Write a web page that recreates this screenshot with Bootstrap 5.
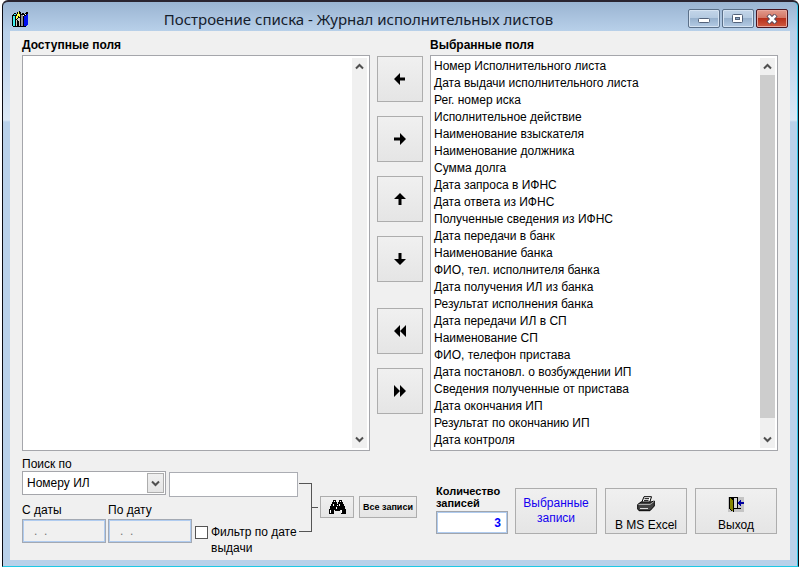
<!DOCTYPE html>
<html lang="ru">
<head>
<meta charset="utf-8">
<meta name="viewport" content="width=device-width, initial-scale=1">
<title>Построение списка - Журнал исполнительных листов</title>
<link rel="stylesheet" href="https://cdn.jsdelivr.net/npm/bootstrap@5.3.0/dist/css/bootstrap.min.css">
<style>
body{font-family:"Liberation Sans",Arial,sans-serif;font-size:12px;line-height:17px;color:#000;background:#fff}
.win{min-height:100vh;margin:0 3px 0 2px;padding:0 8px 6px 7px;border:1px solid #0a0a12;border-top:2px solid #2a2430;border-bottom:1px solid #1fc8e4;border-radius:6px 6px 0 0;box-shadow:inset -1px 0 #35c8ea;
 background:linear-gradient(#9ab4d2 0,#b9d1ea 30px,#bdd3eb 45px,#dbe8f6 118px,#b9d1ea 120px,#b9d1ea 100%)}
.titlebar{height:29px;padding:0 2px 3px}
.title-text{font:15px/18px "Noto Sans","Open Sans",sans-serif;color:#15202c}
.caps{gap:2px}
.cap{width:32px;height:19px;padding:0;border:1px solid #5b7089;border-radius:2px;box-shadow:inset 0 0 0 1px #d5e3f2;background:linear-gradient(#c3d5e9 0,#b3c9e0 48%,#97b1cd 50%,#b4cbe4 100%)}
.cap-close{border-color:#4a1520;box-shadow:inset 0 0 0 1px #e8a79c;background:linear-gradient(#e29a8c 0,#d27463 48%,#b8301b 50%,#cf5a41 100%)}
.client{background:#f0f0f0;padding:6px 12px 4px}
.head{font-weight:700;font-size:12px;line-height:16px;margin-bottom:2px}
.listbox{background:#fff;border:1px solid #a5a6ab;padding:2px 2px 2px 0}
.listbox select{border:0;outline:0;background:#fff;overflow:hidden;padding:1px 0 0;color:#000;min-width:0;font-size:12px;border-radius:0}
.listbox option{padding:0 3px;min-height:17px;line-height:17px}
.sbar{width:15px;background:#f0f0f0}
.sbar button{height:17px;width:15px;padding:0;border:0;background:none}
.thumb{flex:344 0 0;background:#cdcdcd}
.rest{flex:13 0 0}
.mid{width:60px}
.tool{border:1px solid #adadad;background:linear-gradient(#f0f0f0,#e5e5e5);padding:0;color:#000;border-radius:0}
.sq{width:46px;height:46px}
.mid-list{gap:14px;padding-top:1px}
.mid-list .apart{margin-top:12px}
.foot{padding-top:5px}
.search{flex:0 0 276px}
.search .by{line-height:15px;padding-top:1px;height:15px}
.combo{width:144px;height:24px;border:1px solid #a5a6ab;background:#fff}
.combo select{appearance:none;border:0;background:none;padding:0 4px;color:#000;outline:0;min-width:0}
.combo .drop{width:17px;height:20px;margin:1px}
.field{border:1px solid #abadb3;background:#fff;height:25px;min-width:0;padding:0 4px;margin:1px 0 0 3px;border-radius:0}
.dates{padding-top:5px;gap:2px}
.datef{width:84px;height:24px;border:1px solid #a3a9b3;box-shadow:inset 0 0 0 1px #b0ccf0;background:#f0f0f0;color:#777;padding:0 11px;display:block;border-radius:0}
.tick{appearance:none;width:13px;height:13px;border:1px solid #555;background:#fff;margin:2px 3px 0 1px;flex:none}
.tick:checked{background:#336}
.filter{line-height:16px;padding-top:22px;white-space:nowrap}
.brace{padding:27px 2px 0 1px}
.brace-box{width:13px;height:49px;border:1px solid #555;border-left:0}
.brace-tip{width:6px;height:1px;background:#555}
.find{width:34px;height:22px}
.all{width:58px;height:22px;font-size:9px;font-weight:700;line-height:12px;white-space:nowrap}
.lookup{padding-top:40px;gap:5px}
.count{width:72px;padding-top:29px}
.count label{font-size:11px;font-weight:700;line-height:12px;margin-bottom:2px}
.count input{width:72px;height:23px;border:1px solid #a0a5ad;box-shadow:inset 0 0 0 1px #b0ccf0;background:#fff;color:#00f;font-weight:700;text-align:right;padding:0 6px;border-radius:0}
.acts{padding:32px 1px 0 0;gap:8px;margin-left:7px}
.big{width:82px;height:46px;line-height:15px}
.big svg{margin-bottom:6px}
.blue{color:#1200f0}
svg{display:block;flex:none}
</style>
<script src="https://cdn.jsdelivr.net/npm/bootstrap@5.3.0/dist/js/bootstrap.bundle.min.js"></script>
</head>
<body>
<div class="win d-flex flex-column">
 <header class="titlebar d-flex align-items-end">
  <svg width="17" height="17" viewBox="0 0 17 17" shape-rendering="crispEdges" aria-hidden="true">
   <path fill="#000" d="M0 4h1v-1h1v-1h2v1h1v-2h2v-1h1v1h1v2h1v-1h2v1h1v-1h1v-1h2v13h-1v1h-1v1h-13v-1h-1z"/>
   <path fill="#3ff0f0" d="M1 5h2v10h-2zM2 3h2v1h-2z"/>
   <path fill="#ff4" d="M4 5h1v3h-1zM5 3h1v4h-1zM6 1h1v4h-1zM7 3h1v3h-1z"/>
   <path fill="#d0d0c0" d="M4 9h1v6h-1zM5 8h1v1h-1zM6 7h1v3h-1zM7 7h1v8h-1z"/>
   <path fill="#909090" d="M9 4h1v11h-1zM10 4h1v11h-1z"/>
   <path fill="#0010f0" d="M12 5h3v10h-3zM15 3h1v11h-1zM14 4h1v1h-1z"/>
   <path fill="#fff" d="M11 4h1v1h-1zM13 3h1v1h-1z"/>
  </svg>
  <div class="title-text flex-grow-1 text-center">Построение списка - Журнал исполнительных листов</div>
  <div class="caps d-flex">
   <button class="cap d-flex align-items-center justify-content-center" aria-label="Свернуть"><svg class="mt-1" width="12" height="6"><rect x=".5" y=".5" width="11" height="4" rx="1" fill="#fff" stroke="#53627a"/></svg></button>
   <button class="cap d-flex align-items-center justify-content-center" aria-label="Развернуть"><svg width="12" height="10"><rect x=".5" y=".5" width="10" height="8" rx="1" fill="#fff" stroke="#53627a"/><rect x="3.5" y="3.5" width="4" height="2" fill="#8ca6c4" stroke="#53627a"/></svg></button>
   <button class="cap cap-close d-flex align-items-center justify-content-center" aria-label="Закрыть"><svg width="12" height="10" viewBox="0 0 12 10"><path d="M2 1l8 8M10 1l-8 8" stroke="#564a5c" stroke-width="4.500"/><path d="M2.500 1.500l7 7M9.500 1.500l-7 7" stroke="#fff" stroke-width="2.500"/></svg></button>
  </div>
 </header>
 <main class="client flex-grow-1 d-flex flex-column">
  <section class="d-flex flex-grow-1">
   <div class="col d-flex flex-column">
    <label class="head" for="avail">Доступные поля</label>
    <div class="listbox d-flex flex-grow-1">
     <select id="avail" class="flex-grow-1" multiple size="10"></select>
     <div class="sbar d-flex flex-column justify-content-between">
      <button aria-label="Вверх"><svg class="mx-auto" width="9" height="7"><path d="M1 5.500L4.500 2L8 5.500" fill="none" stroke="#505050" stroke-width="2"/></svg></button>
      <button aria-label="Вниз"><svg class="mx-auto" width="9" height="7"><path d="M1 1.500L4.500 5L8 1.500" fill="none" stroke="#505050" stroke-width="2"/></svg></button>
     </div>
    </div>
   </div>
   <div class="mid d-flex flex-column align-items-center">
    <div class="head">&nbsp;</div>
    <div class="mid-list d-flex flex-column">
     <button class="tool sq" aria-label="Убрать поле"><svg class="mx-auto" width="12" height="12" viewBox="0 0 12 12"><path d="M0 6L6 0V4.500H11V7.500H6V12z"/></svg></button>
     <button class="tool sq" aria-label="Добавить поле"><svg class="mx-auto" width="12" height="12" viewBox="0 0 12 12"><path d="M12 6L6 0V4.500H0V7.500H6V12z"/></svg></button>
     <button class="tool sq" aria-label="Выше"><svg class="mx-auto" width="12" height="12" viewBox="0 0 12 12"><path d="M6 0L0 6H4.500V12H7.500V6H12z"/></svg></button>
     <button class="tool sq" aria-label="Ниже"><svg class="mx-auto" width="12" height="12" viewBox="0 0 12 12"><path d="M6 12L0 6H4.500V0H7.500V6H12z"/></svg></button>
     <button class="tool sq apart" aria-label="Убрать все"><svg class="mx-auto" width="12" height="12" viewBox="0 0 12 12"><path d="M0 6L6 0V12zM6 6L12 0V12z"/></svg></button>
     <button class="tool sq" aria-label="Добавить все"><svg class="mx-auto" width="12" height="12" viewBox="0 0 12 12"><path d="M0 0L6 6L0 12zM6 0L12 6L6 12z"/></svg></button>
    </div>
   </div>
   <div class="col d-flex flex-column">
    <label class="head" for="chosen">Выбранные поля</label>
    <div class="listbox d-flex flex-grow-1">
     <select id="chosen" class="flex-grow-1" multiple size="22">
      <option>Номер Исполнительного листа</option><option>Дата выдачи исполнительного листа</option><option>Рег. номер иска</option><option>Исполнительное действие</option><option>Наименование взыскателя</option><option>Наименование должника</option><option>Сумма долга</option><option>Дата запроса в ИФНС</option><option>Дата ответа из ИФНС</option><option>Полученные сведения из ИФНС</option><option>Дата передачи в банк</option><option>Наименование банка</option><option>ФИО, тел. исполнителя банка</option><option>Дата получения ИЛ из банка</option><option>Результат исполнения банка</option><option>Дата передачи ИЛ в СП</option><option>Наименование СП</option><option>ФИО, телефон пристава</option><option>Дата постановл. о возбуждении ИП</option><option>Сведения полученные от пристава</option><option>Дата окончания ИП</option><option>Результат по окончанию ИП</option><option>Дата контроля</option>
     </select>
     <div class="sbar d-flex flex-column">
      <button aria-label="Вверх"><svg class="mx-auto" width="9" height="7"><path d="M1 5.500L4.500 2L8 5.500" fill="none" stroke="#505050" stroke-width="2"/></svg></button>
      <div class="thumb"></div><div class="rest"></div>
      <button aria-label="Вниз"><svg class="mx-auto" width="9" height="7"><path d="M1 1.500L4.500 5L8 1.500" fill="none" stroke="#505050" stroke-width="2"/></svg></button>
     </div>
    </div>
   </div>
  </section>
  <section class="foot d-flex align-items-start">
   <div class="search">
    <label class="by d-block" for="by">Поиск по</label>
    <div class="d-flex align-items-start">
     <div class="combo d-flex">
      <select id="by" class="flex-grow-1"><option>Номеру ИЛ</option></select>
      <button class="tool drop" aria-label="Открыть список" tabindex="-1"><svg class="mx-auto" width="9" height="7"><path d="M1 1.500L4.500 5L8 1.500" fill="none" stroke="#505050" stroke-width="2"/></svg></button>
     </div>
     <input class="field flex-grow-1 w-25" type="text" aria-label="Текст поиска">
    </div>
    <div class="dates d-flex align-items-start">
     <div><label class="d-block" for="from">С даты</label><input id="from" class="datef" value=".  ." readonly></div>
     <div><label class="d-block" for="to">По дату</label><input id="to" class="datef" value=".  ." readonly></div>
     <div class="filter d-flex align-items-start">
      <input class="tick" type="checkbox" id="bydate"><label for="bydate">Фильтр по дате<br>выдачи</label>
     </div>
    </div>
   </div>
   <div class="brace d-flex align-items-center" aria-hidden="true">
    <div class="brace-box"></div><div class="brace-tip"></div>
   </div>
   <div class="lookup d-flex">
    <button class="tool find" aria-label="Найти"><svg class="mx-auto" width="17" height="15" viewBox="0 0 17 15" shape-rendering="crispEdges">
     <path d="M4 0h3v2h1v2h1v-2h1v-2h3v2h1v2h1v2h1v3h1v5h-5v-4h-1v1h-5v-1h-1v4h-5v-5h1v-3h1v-2h1v-2h1z"/>
     <path fill="#fff" d="M5 1h1v1h-1zM11 1h1v1h-1zM4 4h1v2h-1zM1 10h1v3h-1zM8 5h1v1h-1zM7 7h1v2h-1zM10 4h1v2h-1zM12 10h1v3h-1z"/></svg></button>
    <button class="tool all">Все записи</button>
   </div>
   <div class="count ms-auto">
    <label class="d-block" for="num">Количество<br>записей</label>
    <input id="num" class="d-block" value="3">
   </div>
   <div class="acts d-flex">
    <button class="tool big blue">Выбранные<br>записи</button>
    <button class="tool big d-flex flex-column align-items-center justify-content-end">
     <svg width="18" height="16" viewBox="0 0 18 16" aria-hidden="true"><path d="M4.500 7L7 .7H14.500L12.500 7z" fill="#fff" stroke="#000"/><path d="M7.500 2.700h4.500M7 4.700h4.500" stroke="#000"/><path d="M.7 8.500L4 6H14L17.300 5V10L13 14.700H2L.7 13z" fill="#444" stroke="#000"/><path d="M1.500 8.500H13L17 5.500" fill="none" stroke="#aaa"/><path d="M3 12.500h8" stroke="#ddd"/></svg>
     <span>В MS Excel</span></button>
    <button class="tool big d-flex flex-column align-items-center justify-content-end">
     <svg width="16" height="15" viewBox="0 0 16 15" shape-rendering="crispEdges" aria-hidden="true"><path fill="#c4c4c4" d="M0 0h16v15h-16z"/><path d="M1 0h9v11h3v1h-7v3h-1v-1h-2v-1h-1v-1h-1z"/><path fill="#d8d8d8" d="M6 1h3v10h-3z"/><path fill="#878700" d="M2 1h1v1h1v1h1v11h-1v-1h-1v-1h-1z"/><path fill="#0000a0" d="M10 5h1v-1h1v-1h1v2h3v2h-3v2h-1v-1h-1v-1h-1z"/></svg>
     <span>Выход</span></button>
   </div>
  </section>
 </main>
</div>
</body>
</html>
